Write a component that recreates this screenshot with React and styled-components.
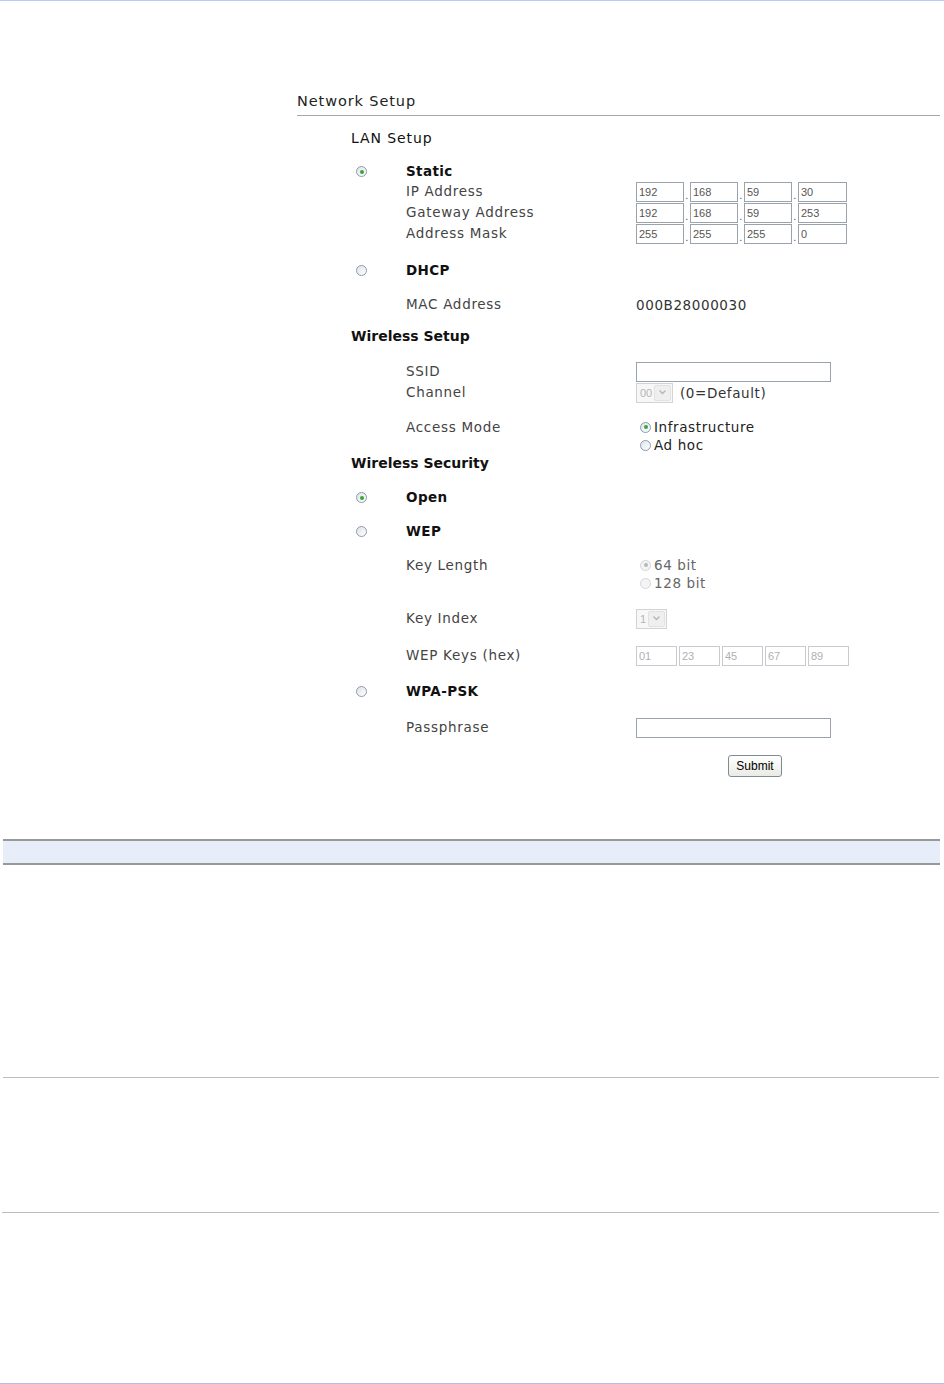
import React from "react";
import styled, { createGlobalStyle } from "styled-components";

const GlobalStyle = createGlobalStyle`
  html, body {
    margin: 0;
    padding: 0;
    background: #fff;
  }
  body {
    font-family: "DejaVu Sans", Verdana, sans-serif;
    font-size: 13px;
    color: #333;
  }
`;

const Page = styled.div`
  width: 944px;
  min-height: 1384px;
  display: flex;
  flex-direction: column;
  border-top: 1px solid #b8cdf2;
  box-sizing: border-box;
`;

const Panel = styled.div`
  margin: 86px 4px 0 297px;
`;

const Title = styled.h1`
  margin: 0;
  font-size: 14.5px;
  font-weight: normal;
  letter-spacing: 0.9px;
  line-height: 28px;
  color: #222;
  border-bottom: 1px solid #a8a8a8;
`;

const Form = styled.form`
  margin-left: 54px;
  display: flex;
  flex-direction: column;
`;

const Row = styled.div`
  display: grid;
  grid-template-columns: 55px 230px 1fr;
  align-items: ${(p) => (p.$top ? "start" : "center")};
  min-height: ${(p) => p.$h || 21}px;
  margin-top: ${(p) => p.$mt || 0}px;
`;

const Heading = styled.div`
  grid-column: 1 / 4;
  font-size: 14px;
  font-weight: ${(p) => (p.$bold ? 600 : "normal")};
  letter-spacing: ${(p) => (p.$bold ? "0" : "0.9px")};
  color: #111;
  line-height: ${(p) => p.$h || 21}px;
`;

const Label = styled.div`
  grid-column: 2;
  font-size: 13.5px;
  color: ${(p) => (p.$strong ? "#111" : "#444")};
  font-weight: ${(p) => (p.$strong ? "bold" : "normal")};
  line-height: ${(p) => p.$lh || 21}px;
  letter-spacing: ${(p) => (p.$strong ? "0.4px" : "0.7px")};
`;

const Value = styled.div`
  grid-column: 3;
  display: flex;
  align-items: center;
  font-size: 13.5px;
  color: #333;
  letter-spacing: 0.6px;
`;

const Stack = styled.div`
  grid-column: 3;
  display: flex;
  flex-direction: column;
`;

const RadioCell = styled.div`
  grid-column: 1;
  display: flex;
  align-items: center;
  padding-left: 5px;
`;

const Radio = styled.input.attrs({ type: "radio" })`
  appearance: none;
  -webkit-appearance: none;
  margin: 0;
  width: 11px;
  height: 11px;
  border-radius: 50%;
  border: 1px solid ${(p) => (p.disabled ? "#d6d6d6" : "#8a9bb0")};
  background: ${(p) => (p.disabled ? "#f4f4f4" : "linear-gradient(135deg, #dfe3e8, #fff)")};
  box-sizing: border-box;
  display: grid;
  place-items: center;
  &:checked::after {
    content: "";
    width: 4px;
    height: 4px;
    border-radius: 50%;
    background: ${(p) => (p.disabled ? "#b8b8b8" : "#37a737")};
  }
`;

const Choice = styled.label`
  display: flex;
  align-items: center;
  gap: 3px;
  padding-left: 4px;
  line-height: 18px;
  font-size: 13.5px;
  letter-spacing: 0.6px;
  color: ${(p) => (p.$muted ? "#666" : "#222")};
`;

const Box = styled.input`
  width: ${(p) => p.$w || 48}px;
  height: 20px;
  box-sizing: border-box;
  margin: 0;
  padding: 1px 2px 0;
  border: 1px solid ${(p) => (p.disabled ? "#c8ccd0" : "#9aa3ab")};
  background: #fff;
  font-family: "Liberation Sans", Arial, sans-serif;
  font-size: 11px;
  color: ${(p) => (p.disabled ? "#b0b0b0" : "#555")};
  outline: none;
`;

const Dot = styled.span`
  width: 6px;
  align-self: flex-end;
  font-family: "Liberation Sans", Arial, sans-serif;
  font-size: 11px;
  line-height: 14px;
  color: #555;
  text-align: center;
`;

const KeyRow = styled.div`
  display: flex;
  gap: 2px;
`;

const FakeSelect = styled.div`
  display: flex;
  align-items: stretch;
  width: ${(p) => p.$w}px;
  height: 20px;
  box-sizing: border-box;
  border: 1px solid #d3d3d3;
  background: #f7f7f7;
  font-family: "Liberation Sans", Arial, sans-serif;
  font-size: 11px;
  letter-spacing: 0;
  color: #b5b5b5;
`;

const SelectText = styled.span`
  flex: 1;
  padding-left: 3px;
  line-height: 18px;
`;

const SelectArrow = styled.span`
  width: 15px;
  margin: 1px;
  border: 1px solid #e2e2e2;
  border-radius: 2px;
  background: #efefef;
  display: grid;
  place-items: center;
`;

const Hint = styled.span`
  margin-left: 7px;
`;

const SubmitButton = styled.button`
  margin-left: 92px;
  width: 54px;
  height: 22px;
  padding: 0;
  border: 1px solid #7d8b99;
  border-radius: 3px;
  background: linear-gradient(#ffffff, #ebebe4);
  font-family: "Liberation Sans", Arial, sans-serif;
  font-size: 12px;
  letter-spacing: 0;
  color: #000;
`;

const InfoBar = styled.div`
  margin: 62px 4px 0 3px;
  height: 22px;
  background: #e7eefa;
  border-top: 2px solid #999;
  border-bottom: 2px solid #999;
`;

const Section = styled.div`
  height: ${(p) => p.$h}px;
  margin: 0 5px 0 ${(p) => p.$ml || 3}px;
  border-bottom: 1px solid #bdbdbd;
`;

const BottomRule = styled.div`
  margin-top: auto;
  border-bottom: 1px solid #b5bde8;
`;

const ArrowIcon = () => (
  <svg width="7" height="5" viewBox="0 0 7 5">
    <path d="M0.5 0.5 L3.5 3.5 L6.5 0.5" fill="none" stroke="#b5b5b5" strokeWidth="1.3" />
  </svg>
);

const IpField = ({ parts }) => (
  <Value>
    {parts.map((v, i) => (
      <React.Fragment key={i}>
        {i > 0 && <Dot>.</Dot>}
        <Box defaultValue={v} $w={i === 3 ? 49 : 48} />
      </React.Fragment>
    ))}
  </Value>
);

export default function App() {
  return (
    <>
      <GlobalStyle />
      <Page>
        <Panel>
          <Title>Network Setup</Title>
          <Form onSubmit={(e) => e.preventDefault()}>
            <Row $mt={12}>
              <Heading>LAN Setup</Heading>
            </Row>

            <Row $mt={13} $h={19}>
              <RadioCell>
                <Radio name="lan" defaultChecked />
              </RadioCell>
              <Label $strong $lh={19}>Static</Label>
            </Row>
            <Row>
              <Label>IP Address</Label>
              <IpField parts={["192", "168", "59", "30"]} />
            </Row>
            <Row>
              <Label>Gateway Address</Label>
              <IpField parts={["192", "168", "59", "253"]} />
            </Row>
            <Row>
              <Label>Address Mask</Label>
              <IpField parts={["255", "255", "255", "0"]} />
            </Row>

            <Row $mt={16}>
              <RadioCell>
                <Radio name="lan" />
              </RadioCell>
              <Label $strong>DHCP</Label>
            </Row>
            <Row $mt={13}>
              <Label>MAC Address</Label>
              <Value>000B28000030</Value>
            </Row>

            <Row $mt={11}>
              <Heading $bold>Wireless Setup</Heading>
            </Row>
            <Row $mt={14}>
              <Label>SSID</Label>
              <Value>
                <Box $w={195} />
              </Value>
            </Row>
            <Row>
              <Label>Channel</Label>
              <Value>
                <FakeSelect $w={37}>
                  <SelectText>00</SelectText>
                  <SelectArrow>
                    <ArrowIcon />
                  </SelectArrow>
                </FakeSelect>
                <Hint>(0=Default)</Hint>
              </Value>
            </Row>
            <Row $mt={15} $top $h={36}>
              <Label $lh={18}>Access Mode</Label>
              <Stack>
                <Choice>
                  <Radio name="mode" defaultChecked />
                  Infrastructure
                </Choice>
                <Choice>
                  <Radio name="mode" />
                  Ad hoc
                </Choice>
              </Stack>
            </Row>

            <Row $h={18}>
              <Heading $bold $h={18}>Wireless Security</Heading>
            </Row>
            <Row $mt={15}>
              <RadioCell>
                <Radio name="sec" defaultChecked />
              </RadioCell>
              <Label $strong>Open</Label>
            </Row>
            <Row $mt={13}>
              <RadioCell>
                <Radio name="sec" />
              </RadioCell>
              <Label $strong>WEP</Label>
            </Row>
            <Row $mt={14} $top $h={36}>
              <Label $lh={18}>Key Length</Label>
              <Stack>
                <Choice $muted>
                  <Radio name="len" defaultChecked disabled />
                  64 bit
                </Choice>
                <Choice $muted>
                  <Radio name="len" disabled />
                  128 bit
                </Choice>
              </Stack>
            </Row>
            <Row $mt={16}>
              <Label>Key Index</Label>
              <Value>
                <FakeSelect $w={31}>
                  <SelectText>1</SelectText>
                  <SelectArrow>
                    <ArrowIcon />
                  </SelectArrow>
                </FakeSelect>
              </Value>
            </Row>
            <Row $mt={16}>
              <Label>WEP Keys (hex)</Label>
              <Value>
                <KeyRow>
                  {["01", "23", "45", "67", "89"].map((k) => (
                    <Box key={k} defaultValue={k} $w={41} disabled />
                  ))}
                </KeyRow>
              </Value>
            </Row>
            <Row $mt={15}>
              <RadioCell>
                <Radio name="sec" />
              </RadioCell>
              <Label $strong>WPA-PSK</Label>
            </Row>
            <Row $mt={15}>
              <Label>Passphrase</Label>
              <Value>
                <Box $w={195} />
              </Value>
            </Row>
            <Row $mt={17} $h={22}>
              <Value>
                <SubmitButton type="submit">Submit</SubmitButton>
              </Value>
            </Row>
          </Form>
        </Panel>

        <InfoBar />
        <Section $h={212} />
        <Section $h={134} $ml={2} />
        <BottomRule />
      </Page>
    </>
  );
}
